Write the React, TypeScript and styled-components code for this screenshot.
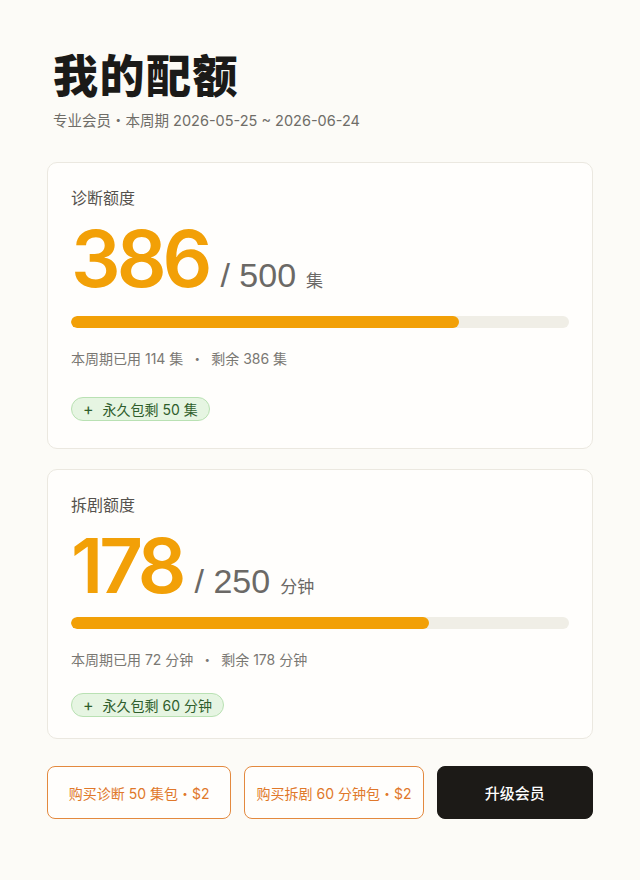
import React from "react";
import styled, { createGlobalStyle } from "styled-components";

const Global = createGlobalStyle`
  html, body { margin: 0; padding: 0; background: #fcfbf7; }
  body { font-family: "Inter", "Noto Sans CJK SC", sans-serif; color: #222; }
  * { box-sizing: border-box; }
`;

const Page = styled.div`
  width: 640px;
  padding: 44px 47px 40px;
  display: flex;
  flex-direction: column;
`;

const Header = styled.header`
  padding: 0 6px;
  display: flex;
  flex-direction: column;
  gap: 5px;
  margin-bottom: 30px;
`;

const Title = styled.h1`
  margin: 0;
  font-family: "Noto Sans CJK SC", serif;
  font-weight: 900;
  font-size: 45px;
  line-height: 60px;
  letter-spacing: 1.5px;
  color: #1b1a18;
`;

const Sub = styled.div`
  font-family: "Inter", "Noto Sans CJK SC", sans-serif;
  font-size: 14.5px;
  line-height: 22px;
  color: #6f6d68;
`;

const Cards = styled.div`
  display: flex;
  flex-direction: column;
  gap: 20px;
`;

const Card = styled.section<{ $dense?: boolean }>`
  background: #fffefc;
  border: 1px solid #ebe8e0;
  border-radius: 10px;
  padding: 23px 23px ${(p) => (p.$dense ? "21px" : "27px")};
  display: flex;
  flex-direction: column;
`;

const Label = styled.div`
  font-size: 16px;
  line-height: 24px;
  color: #55524d;
`;

const NumberRow = styled.div`
  display: flex;
  align-items: baseline;
  margin-top: 10px;
`;

const Big = styled.span<{ $dense?: boolean }>`
  font-family: "Inter", "Liberation Sans", sans-serif;
  font-weight: 600;
  font-size: ${(p) => (p.$dense ? "76px" : "78px")};
  line-height: ${(p) => (p.$dense ? "76px" : "78px")};
  color: #f2a007;
  letter-spacing: -4px;
`;

const Total = styled.span`
  font-family: "Liberation Sans", Arial, sans-serif;
  font-size: 34px;
  color: #6b6966;
  margin-left: 12px;
`;

const Unit = styled.span`
  font-family: "Noto Sans CJK SC", sans-serif;
  font-size: 17px;
  color: #6b6966;
  margin-left: 10px;
`;

const Track = styled.div<{ $dense?: boolean }>`
  margin-top: ${(p) => (p.$dense ? "14px" : "18px")};
  height: 12px;
  border-radius: 6px;
  background: #f0eee6;
  overflow: hidden;
`;

const Fill = styled.div`
  height: 100%;
  border-radius: 6px;
  background: #f2a007;
`;

const Meta = styled.div`
  margin-top: 20px;
  font-size: 14px;
  line-height: 20px;
  color: #7a7873;
`;

const Dot = styled.span<{ $wide?: boolean }>`
  font-family: "Noto Sans CJK SC", sans-serif;
  margin: 0 ${(p) => (p.$wide ? "3px" : "0")};
`;

const ChipRow = styled.div<{ $dense?: boolean }>`
  margin-top: ${(p) => (p.$dense ? "23px" : "28px")};
  display: flex;
`;

const Chip = styled.span`
  display: inline-flex;
  align-items: center;
  gap: 9px;
  height: 24px;
  padding: 0 11px;
  border-radius: 12px;
  background: #e6f5e2;
  border: 1px solid #b9e1b3;
  color: #2f5e2c;
  font-size: 14px;
`;

const Plus = styled.span`
  font-size: 16px;
  line-height: 1;
`;

const Actions = styled.div`
  margin-top: 27px;
  display: grid;
  grid-template-columns: 184fr 179fr 156fr;
  gap: 13px;
`;

const Button = styled.button<{ $primary?: boolean }>`
  height: 53px;
  border-radius: 8px;
  font-family: "Inter", "Noto Sans CJK SC", sans-serif;
  font-size: ${(p) => (p.$primary ? "15px" : "14px")};
  font-weight: ${(p) => (p.$primary ? 500 : 400)};
  cursor: pointer;
  border: 1.5px solid ${(p) => (p.$primary ? "#1c1a17" : "#e3893e")};
  background: ${(p) => (p.$primary ? "#1c1a17" : "#fffefc")};
  color: ${(p) => (p.$primary ? "#ffffff" : "#e0782a")};
  padding: 0;
`;

type Quota = {
  label: string;
  remain: number;
  total: number;
  unit: string;
  used: number;
  extra: number;
  dense?: boolean;
};

const quotas: Quota[] = [
  { label: "诊断额度", remain: 386, total: 500, unit: "集", used: 114, extra: 50 },
  { label: "拆剧额度", remain: 178, total: 250, unit: "分钟", used: 72, extra: 60, dense: true },
];

export default function App() {
  return (
    <>
      <Global />
      <Page>
        <Header>
          <Title>我的配额</Title>
          <Sub>
            专业会员<Dot>・</Dot>本周期 2026-05-25 ~ 2026-06-24
          </Sub>
        </Header>
        <Cards>
          {quotas.map((q) => (
            <Card key={q.label} $dense={q.dense}>
              <Label>{q.label}</Label>
              <NumberRow>
                <Big $dense={q.dense}>{q.remain}</Big>
                <Total>/ {q.total}</Total>
                <Unit>{q.unit}</Unit>
              </NumberRow>
              <Track $dense={q.dense}>
                <Fill style={{ width: `${(q.remain / q.total) * 100 + 0.7}%` }} />
              </Track>
              <Meta>
                本周期已用 {q.used} {q.unit} <Dot $wide>・</Dot> 剩余 {q.remain} {q.unit}
              </Meta>
              <ChipRow $dense={q.dense}>
                <Chip>
                  <Plus>+</Plus>
                  永久包剩 {q.extra} {q.unit}
                </Chip>
              </ChipRow>
            </Card>
          ))}
        </Cards>
        <Actions>
          <Button>
            购买诊断 50 集包<Dot>・</Dot>$2
          </Button>
          <Button>
            购买拆剧 60 分钟包<Dot>・</Dot>$2
          </Button>
          <Button $primary>升级会员</Button>
        </Actions>
      </Page>
    </>
  );
}
